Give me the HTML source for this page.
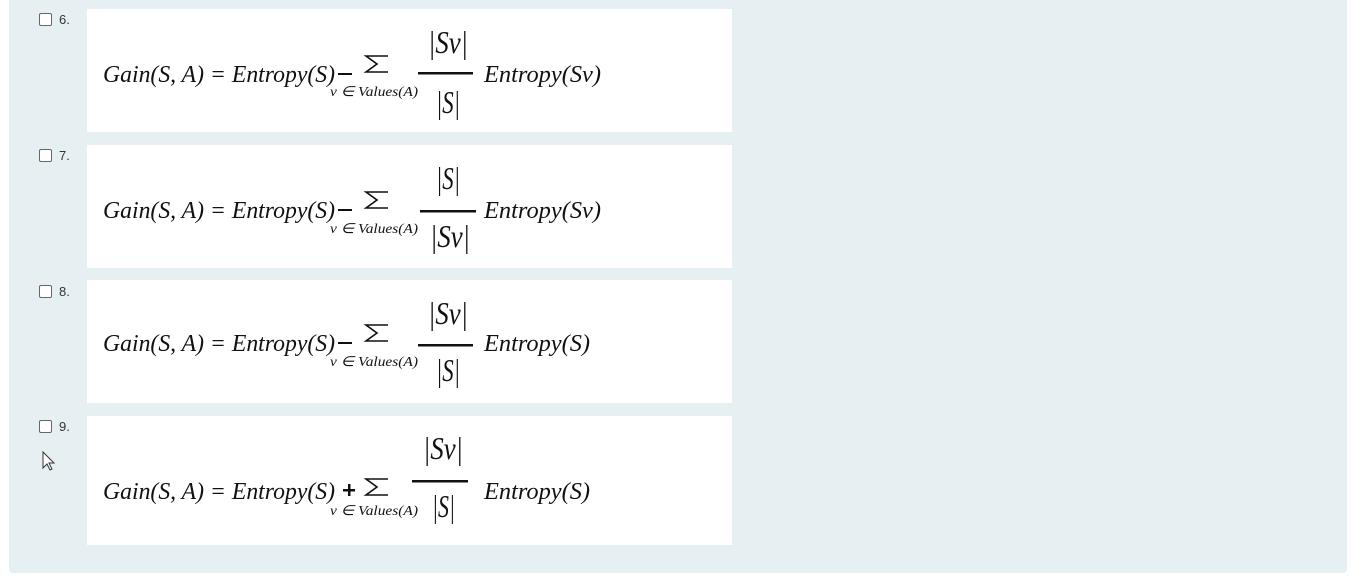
<!DOCTYPE html>
<html><head><meta charset="utf-8"><style>
html,body{margin:0;padding:0;background:#fff;width:1358px;height:583px;overflow:hidden}
.panel{position:absolute;left:9px;top:0;width:1338px;height:573px;background:#e6f0f3;border-radius:0 0 4px 4px}
.box{position:absolute;left:87px;width:645px;background:#fff}
.cb{position:absolute;left:39px;width:11px;height:11px;border:1px solid #666;border-radius:2px;background:#fff}
.lb{position:absolute;left:59px;font:13px "Liberation Sans",sans-serif;color:#333}
svg{position:absolute;left:0;top:0}
</style></head><body>
<div class="panel"></div>
<div class="box" style="top:9px;height:123px"></div>
<div class="box" style="top:145px;height:123px"></div>
<div class="box" style="top:280px;height:123px"></div>
<div class="box" style="top:416px;height:129px"></div>
<div class="cb" style="top:13px"></div><div class="lb" style="top:12px">6.</div>
<div class="cb" style="top:149px"></div><div class="lb" style="top:148px">7.</div>
<div class="cb" style="top:285px"></div><div class="lb" style="top:284px">8.</div>
<div class="cb" style="top:420px"></div><div class="lb" style="top:419px">9.</div>
<svg width="1358" height="583" font-family="Liberation Serif, serif" fill="#111">
<path d="M43 452 L43 468 L47 464 L50 470 L52 469 L49 463 L54 463 Z" fill="#fff" stroke="#333" stroke-width="1"/>
<g font-style="italic" font-size="24">
<text x="103" y="82" textLength="232" lengthAdjust="spacingAndGlyphs">Gain(S, A) = Entropy(S)</text>
<text x="484" y="82" textLength="117" lengthAdjust="spacingAndGlyphs">Entropy(Sv)</text>
<text x="103" y="218" textLength="232" lengthAdjust="spacingAndGlyphs">Gain(S, A) = Entropy(S)</text>
<text x="484" y="218" textLength="117" lengthAdjust="spacingAndGlyphs">Entropy(Sv)</text>
<text x="103" y="351" textLength="232" lengthAdjust="spacingAndGlyphs">Gain(S, A) = Entropy(S)</text>
<text x="484" y="351" textLength="106" lengthAdjust="spacingAndGlyphs">Entropy(S)</text>
<text x="103" y="499" textLength="232" lengthAdjust="spacingAndGlyphs">Gain(S, A) = Entropy(S)</text>
<text x="484" y="499" textLength="106" lengthAdjust="spacingAndGlyphs">Entropy(S)</text>
</g>
<g font-style="italic" font-size="14">
<text x="330" y="96" textLength="88" lengthAdjust="spacingAndGlyphs">v ∈ Values(A)</text>
<text x="330" y="233" textLength="88" lengthAdjust="spacingAndGlyphs">v ∈ Values(A)</text>
<text x="330" y="366" textLength="88" lengthAdjust="spacingAndGlyphs">v ∈ Values(A)</text>
<text x="330" y="515" textLength="88" lengthAdjust="spacingAndGlyphs">v ∈ Values(A)</text>
</g>
<g fill="none" stroke="#111" stroke-width="1.6" stroke-linejoin="miter">
<path d="M388 56 L366 56 L377 64 L366 72 L388 72"/>
<path d="M388 192 L366 192 L377 200 L366 208 L388 208"/>
<path d="M388 325 L366 325 L377 333 L366 341 L388 341"/>
<path d="M388 479 L366 479 L377 487 L366 495 L388 495"/>
</g>
<rect x="338" y="73" width="14" height="2"/>
<rect x="338" y="209" width="14" height="2"/>
<rect x="338" y="342" width="14" height="2"/>
<rect x="343" y="489" width="12" height="2.5"/><rect x="348" y="484" width="2.5" height="12"/>
<rect x="418" y="72" width="55" height="2.5"/>
<rect x="420" y="210" width="56" height="2.5"/>
<rect x="418" y="344" width="55" height="2.5"/>
<rect x="412" y="480" width="56" height="2.5"/>
<g font-style="italic" font-size="32">
<text x="428" y="53" textLength="40" lengthAdjust="spacingAndGlyphs">|Sv|</text>
<text x="436" y="113" textLength="24" lengthAdjust="spacingAndGlyphs">|S|</text>
<text x="436" y="189" textLength="24" lengthAdjust="spacingAndGlyphs">|S|</text>
<text x="430" y="247" textLength="40" lengthAdjust="spacingAndGlyphs">|Sv|</text>
<text x="428" y="324" textLength="40" lengthAdjust="spacingAndGlyphs">|Sv|</text>
<text x="436" y="381" textLength="24" lengthAdjust="spacingAndGlyphs">|S|</text>
<text x="423" y="459" textLength="40" lengthAdjust="spacingAndGlyphs">|Sv|</text>
<text x="432" y="517" textLength="23" lengthAdjust="spacingAndGlyphs">|S|</text>
</g>
</svg>
</body></html>
